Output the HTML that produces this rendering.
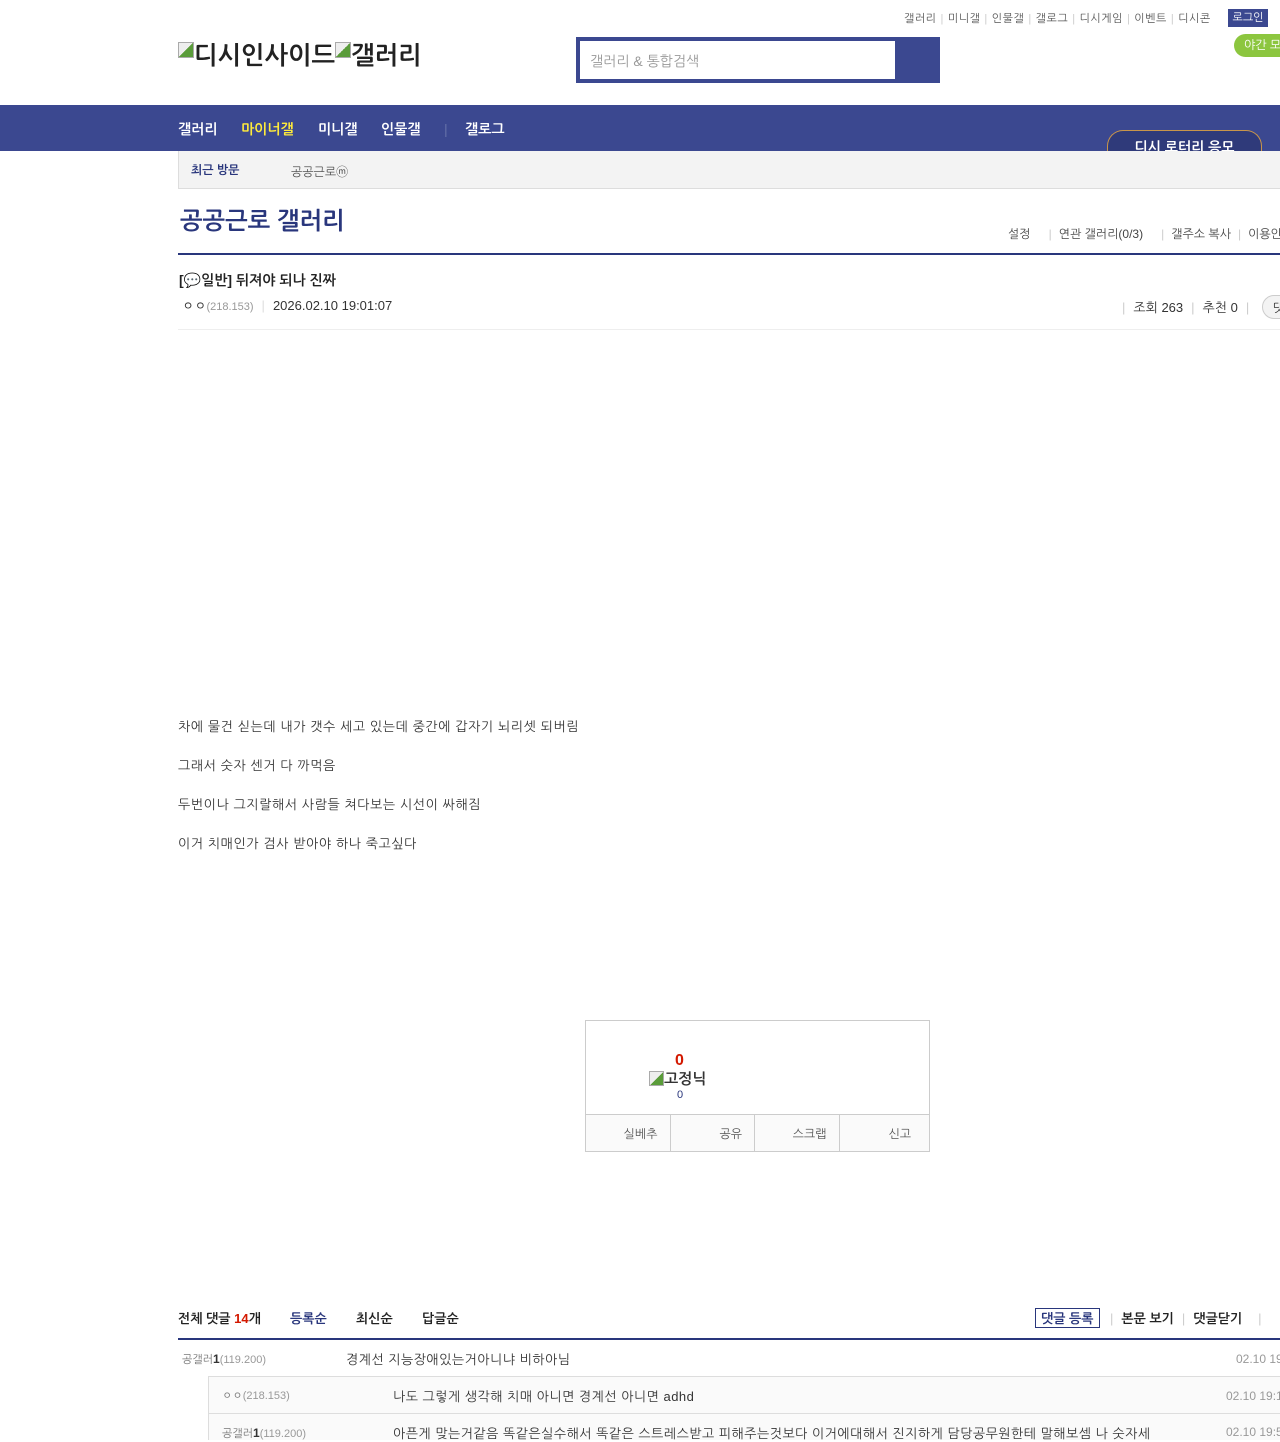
<!DOCTYPE html>
<html><head><meta charset="utf-8">
<style>
*{margin:0;padding:0;box-sizing:border-box}
body{width:1280px;height:1440px;overflow:hidden;background:#fff;font-family:"Liberation Sans","NanumGothic","Noto Sans CJK KR",sans-serif;color:#333;position:relative}
.a{position:absolute;white-space:nowrap}
.top{top:12px;left:904px;font-size:11px;color:#555;letter-spacing:0.5px}
.top span.s{color:#ccc;margin:0 4px}
.login{left:1228px;top:9px;width:40px;height:18px;background:#3b4890;color:#fff;font-size:11px;text-align:center;line-height:18px}
.night{left:1234px;top:34px;width:60px;height:23px;background:#8cc63f;color:#fff;font-size:12px;border-radius:12px;line-height:23px;padding-left:10px}
.logo{left:178px;top:42px;font-size:25px;font-weight:bold;color:#222}
.logo i{display:inline-block;width:16px;height:16px;border:1px solid #aaa;background:linear-gradient(135deg,#eee 50%,#5a9c3a 50%);vertical-align:6px}
.search{left:576px;top:37px;width:364px;height:46px;background:#3b4890}
.search div{position:absolute;left:4px;top:4px;width:315px;height:38px;background:#fff;font-size:14px;color:#999;padding:12px 10px}
.nav{left:0;top:105px;width:1280px;height:46px;background:#3b4890}
.nav span{position:absolute;top:16px;font-size:14px;font-weight:bold;color:#fff}
.lotto{left:1107px;top:130px;width:155px;height:30px;border:1px solid #c9954a;border-bottom:none;border-radius:16px 16px 0 0;background:#2f3a7a;color:#fff;font-size:14px;font-weight:bold;text-align:center;padding-top:8px}
.sub{left:178px;top:151px;width:1110px;height:38px;background:#f3f3f3;border:1px solid #ddd;border-top:none;z-index:2}
.title{left:180px;top:208px;font-size:24px;font-weight:bold;color:#29367c}
.links{top:227px;left:1008px;font-size:12px;color:#444}
.links .s{color:#ccc;margin:0 7px}
.bar{left:178px;top:253px;width:1110px;height:2px;background:#29367c}
.ptitle{left:179px;top:272px;font-size:14px;font-weight:bold;color:#222}
.meta{left:182px;top:298px;font-size:13px;color:#333}
.gray{color:#999;font-size:11px}
.hr{left:178px;top:329px;width:1110px;height:1px;background:#eee}
.body{left:178px;font-size:13px;color:#333;letter-spacing:0.6px}
.rec{left:585px;top:1020px;width:345px;height:132px;border:1px solid #ccc}
.rec .btns{position:absolute;left:0;bottom:0;width:343px;height:37px;border-top:1px solid #ccc;background:#fafafa;display:flex}
.rec .btns div{flex:1;border-right:1px solid #ccc;font-size:12px;color:#555;text-align:right;padding:12px 12px 0 0}
.rec .btns div:last-child{border:none;padding-right:18px}
.cm{top:1311px;font-size:13px;font-weight:bold;color:#222}
.cbar{left:178px;top:1338px;width:1110px;height:2px;background:#29367c}
.row{font-size:13px;color:#333;letter-spacing:0.5px}
.rline{height:1px;background:#ddd}
</style></head><body>
<div class="a top">갤러리<span class="s">|</span>미니갤<span class="s">|</span>인물갤<span class="s">|</span>갤로그<span class="s">|</span>디시게임<span class="s">|</span>이벤트<span class="s">|</span>디시콘</div>
<div class="a login">로그인</div>
<div class="a night">야간 모드</div>
<div class="a logo"><i></i>디시인사이드<i></i>갤러리</div>
<div class="a search"><div>갤러리 &amp; 통합검색</div></div>
<div class="a nav"><span style="left:178px">갤러리</span><span style="left:241px;color:#ffeb3b">마이너갤</span><span style="left:318px">미니갤</span><span style="left:381px">인물갤</span><span style="left:444px;color:#6570a8;font-weight:normal">|</span><span style="left:465px">갤로그</span></div>
<div class="a lotto">디시 로터리 응모</div>
<div class="a sub"><span class="a" style="left:12px;top:12px;font-size:12px;font-weight:bold;color:#29367c">최근 방문</span><span class="a" style="left:112px;top:12px;font-size:12px;color:#555">공공근로ⓜ</span></div>
<div class="a title">공공근로 갤러리</div>
<div class="a links">설정<span class="s" style="margin-left:18px">|</span>연관 갤러리(0/3)<span class="s" style="margin-left:18px">|</span>갤주소 복사<span class="s">|</span>이용안내</div>
<div class="a bar"></div>
<div class="a ptitle">[💬일반] 뒤져야 되나 진짜</div>
<div class="a meta">ㅇㅇ<span class="gray">(218.153)</span><span style="color:#ddd;margin:0 8px">|</span>2026.02.10 19:01:07</div>
<div class="a" style="left:1122px;top:300px;font-size:13px;color:#333"><span style="color:#ccc;margin-right:8px">|</span>조회 263<span style="color:#ccc;margin:0 8px">|</span>추천 0<span style="color:#ccc;margin:0 8px">|</span></div>
<div class="a" style="left:1262px;top:295px;width:40px;height:24px;border:1px solid #ccc;border-radius:12px;background:#f3f3f3;font-size:12px;padding:5px 10px">댓글</div>
<div class="a hr"></div>
<div class="a body" style="top:719px">차에 물건 싣는데 내가 갯수 세고 있는데 중간에 갑자기 뇌리셋 되버림</div>
<div class="a body" style="top:758px">그래서 숫자 센거 다 까먹음</div>
<div class="a body" style="top:797px">두번이나 그지랄해서 사람들 쳐다보는 시선이 싸해짐</div>
<div class="a body" style="top:836px">이거 치매인가 검사 받아야 하나 죽고싶다</div>
<div class="a rec">
<div class="a" style="left:89px;top:31px;font-size:16px;font-weight:bold;color:#d31900">0</div>
<div class="a" style="left:63px;top:50px;font-size:15px;font-weight:bold;color:#333"><i style="display:inline-block;width:15px;height:15px;border:1px solid #aaa;background:linear-gradient(135deg,#eee 50%,#5a9c3a 50%);vertical-align:-2px"></i>고정닉</div>
<div class="a" style="left:91px;top:68px;font-size:11px;color:#29367c">0</div>
<div class="btns"><div>실베추</div><div>공유</div><div>스크랩</div><div>신고</div></div>
</div>
<div class="a cm" style="left:178px">전체 댓글 <span style="color:#d31900">14</span>개</div>
<div class="a cm" style="left:290px;color:#29367c">등록순</div>
<div class="a cm" style="left:356px">최신순</div>
<div class="a cm" style="left:422px">답글순</div>
<div class="a" style="left:1035px;top:1308px;border:1px solid #29367c;font-size:13px;font-weight:bold;color:#29367c;padding:2px 5px 1px">댓글 등록</div>
<div class="a cm" style="left:1110px"><span style="color:#ccc;font-weight:normal;margin-right:8px">|</span>본문 보기<span style="color:#ccc;font-weight:normal;margin:0 8px">|</span>댓글닫기<span style="color:#ccc;font-weight:normal;margin-left:16px">|</span></div>
<div class="a cbar"></div>
<div class="a row" style="left:182px;top:1352px;font-size:11px;color:#777;letter-spacing:0">공갤러<b style="color:#333;font-size:12px">1</b><span style="color:#999">(119.200)</span></div>
<div class="a row" style="left:346px;top:1352px">경계선 지능장애있는거아니냐 비하아님</div>
<div class="a row" style="left:1236px;top:1352px;font-size:12px;color:#999;letter-spacing:0">02.10 19:05:00</div>
<div class="a" style="left:208px;top:1376px;width:1080px;height:64px;background:#fafafa;border-left:1px solid #ddd"></div>
<div class="a rline" style="left:208px;top:1376px;width:1080px"></div>
<div class="a rline" style="left:208px;top:1413px;width:1080px"></div>
<div class="a row" style="left:222px;top:1389px;font-size:11px;color:#777;letter-spacing:0">ㅇㅇ<span style="color:#999">(218.153)</span></div>
<div class="a row" style="left:393px;top:1389px">나도 그렇게 생각해 치매 아니면 경계선 아니면 adhd</div>
<div class="a row" style="left:1226px;top:1389px;font-size:12px;color:#999;letter-spacing:0">02.10 19:10:00</div>
<div class="a row" style="left:222px;top:1426px;font-size:11px;color:#777;letter-spacing:0">공갤러<b style="color:#333;font-size:12px">1</b><span style="color:#999">(119.200)</span></div>
<div class="a row" style="left:393px;top:1426px">아픈게 맞는거같음 똑같은실수해서 똑같은 스트레스받고 피해주는것보다 이거에대해서 진지하게 담당공무원한테 말해보셈 나 숫자세</div>
<div class="a row" style="left:1226px;top:1425px;font-size:12px;color:#999;letter-spacing:0">02.10 19:55:00</div>
</body></html>
